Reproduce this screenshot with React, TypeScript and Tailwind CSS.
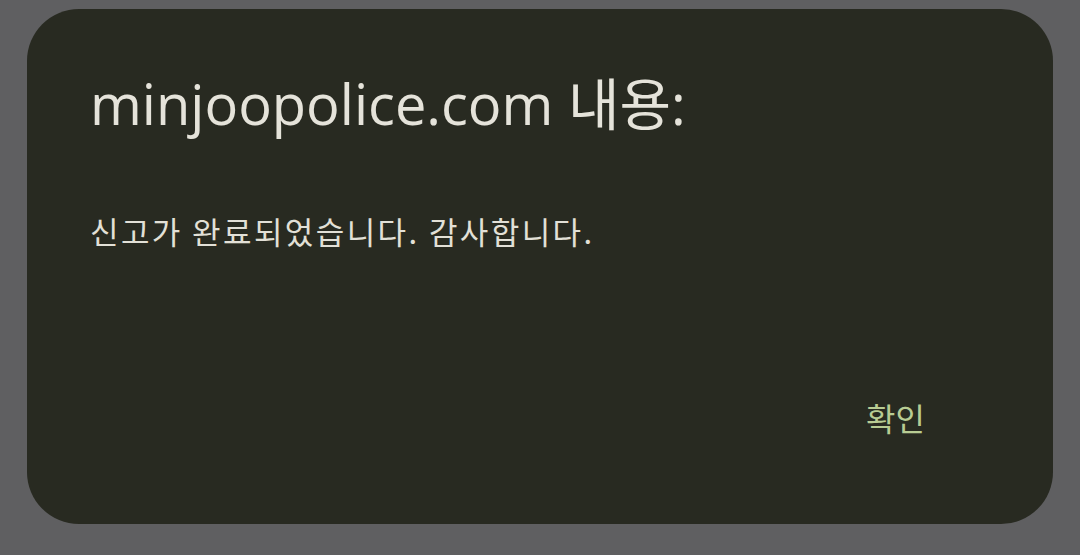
export default function App() {
  return (
    <div className="flex h-[555px] w-[1080px] items-start bg-[#5f5f61] px-[27px] pt-[9px]">
      <div
        className="flex h-[515px] w-full flex-col rounded-[52px] bg-[#282a21] pl-[63px] pr-[128px]"
        style={{ fontFamily: '"Open Sans", "Noto Sans CJK KR", sans-serif' }}
      >
        <h1 className="mt-[58px] text-[56px] font-normal leading-[72px] text-[#e5e3da]">
          minjoopolice.com 내용:
        </h1>
        <p
          className="mt-[72px] text-[31px] leading-[40px] tracking-[2.4px] text-[#e2e0d7]"
          style={{ fontFamily: '"Noto Sans CJK KR", sans-serif' }}
        >
          신고가 완료되었습니다. 감사합니다.
        </p>
        <div className="mt-auto mb-[87px] flex justify-end">
          <button
            className="text-[32px] leading-[40px] text-[#b8cc93]"
            style={{ fontFamily: '"Noto Sans CJK KR", sans-serif' }}
          >
            확인
          </button>
        </div>
      </div>
    </div>
  );
}
